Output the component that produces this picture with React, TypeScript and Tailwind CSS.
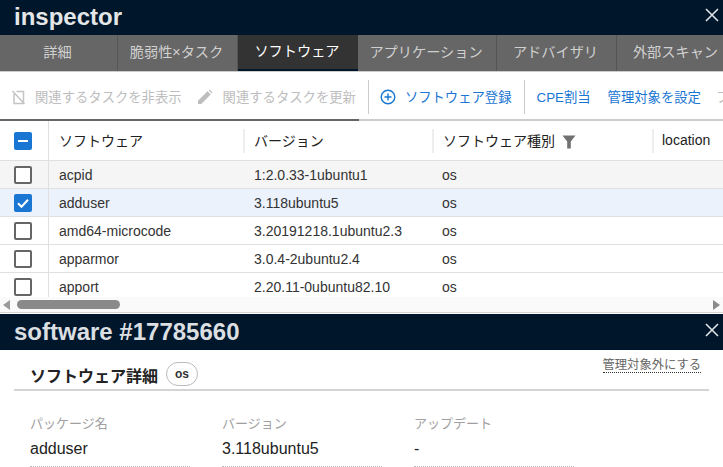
import React from "react";

const font = { fontFamily: '"Liberation Sans","Noto Sans CJK JP",sans-serif' };

const tabs = [
  ["詳細", "w-[118px]"],
  ["脆弱性×タスク", "w-[120px]"],
  ["ソフトウェア", "w-[120px]"],
  ["アプリケーション", "w-[139px]"],
  ["アドバイザリ", "w-[120px]"],
  ["外部スキャン", "w-[120px]"],
];

const rows = [
  ["acpid", "1:2.0.33-1ubuntu1", "os"],
  ["adduser", "3.118ubuntu5", "os"],
  ["amd64-microcode", "3.20191218.1ubuntu2.3", "os"],
  ["apparmor", "3.0.4-2ubuntu2.4", "os"],
  ["apport", "2.20.11-0ubuntu82.10", "os"],
];

function Close({ className }: { className: string }) {
  return (
    <svg width="14" height="14" viewBox="0 0 14 14" className={`shrink-0 ${className}`}>
      <path d="M1 1L13 13M13 1L1 13" stroke="#dfe3e6" strokeWidth="1.6" fill="none" />
    </svg>
  );
}

function Check({ state }: { state: "off" | "on" | "mixed" }) {
  if (state === "off") {
    return <div className="w-[18px] h-[18px] rounded-[2px] border-2 border-[#666666] bg-white" />;
  }
  return (
    <div className="w-[18px] h-[18px] rounded-[2px] bg-[#1976d2] flex items-center justify-center">
      {state === "on" ? (
        <svg width="14" height="14" viewBox="0 0 14 14">
          <path d="M2 7.2L5.5 10.7L12 3.8" stroke="#fff" strokeWidth="2" fill="none" />
        </svg>
      ) : (
        <div className="w-[10px] h-[2px] bg-white" />
      )}
    </div>
  );
}

function Field({ label, value, width }: { label: string; value: string; width: string }) {
  return (
    <div className={width}>
      <div className="text-[13px] leading-[18px] text-[#a0a0a0]">{label}</div>
      <div className="mt-[4px] text-[16px] leading-[24px] text-[#222222] pb-[5px] border-b border-dotted border-[#bbbbbb]">{value}</div>
    </div>
  );
}

export default function App() {
  return (
    <div style={font} className="w-[723px] h-[467px] overflow-hidden bg-white flex flex-col">
      <header className="h-[35px] shrink-0 bg-[#00172b] flex items-center justify-between pl-[14px] pr-[4px]">
        <h1 className="text-[24px] leading-[33px] -mt-[2px] font-bold text-[#e4e6e8]">inspector</h1>
        <Close className="-mt-[6px]" />
      </header>

      <nav className="h-[37px] shrink-0 bg-[#666666] flex overflow-hidden border-b border-[#cccccc]">
        {tabs.map(([t, w], i) => (
          <div
            key={t}
            className={`${w} shrink-0 flex items-center justify-center pr-[2px] text-[14.2px] whitespace-nowrap ${
              i === 2
                ? "bg-[#333333] text-white border-b-2 border-[#00172b]"
                : "text-[#d0d0d0] border-r border-[#555555]"
            }`}
          >
            {t}
          </div>
        ))}
      </nav>

      <div className="h-[47px] shrink-0 flex items-center pt-[2px] text-[13.33px] whitespace-nowrap overflow-hidden">
        <svg width="16" height="16" viewBox="0 0 16 16" className="ml-[10px] shrink-0">
          <path d="M6.5 2.5H13.5V14.5H4V5M2.5 2L14.5 15" stroke="#c4c4c4" strokeWidth="1.5" fill="none" />
        </svg>
        <span className="ml-[9px] pt-[2px] text-[#bdbdbd]">関連するタスクを非表示</span>
        <svg width="16" height="16" viewBox="0 0 16 16" className="ml-[15px] shrink-0">
          <path d="M1 15V11.8L10.5 2.3L13.7 5.5L4.2 15ZM11.5 1.3L12.5 0.5L15.5 3.5L14.7 4.5Z" fill="#bdbdbd" />
        </svg>
        <span className="ml-[10px] pt-[2px] text-[#bdbdbd]">関連するタスクを更新</span>
        <div className="ml-[12px] w-px h-[34px] bg-[#cccccc] shrink-0" />
        <svg width="16" height="16" viewBox="0 0 16 16" className="ml-[11px] shrink-0">
          <circle cx="8" cy="8" r="6.8" stroke="#1976d2" strokeWidth="1.4" fill="none" />
          <path d="M4.5 8H11.5M8 4.5V11.5" stroke="#1976d2" strokeWidth="1.4" />
        </svg>
        <span className="ml-[9px] pt-[2px] text-[#1976d2]">ソフトウェア登録</span>
        <div className="ml-[12px] w-px h-[34px] bg-[#cccccc] shrink-0" />
        <span className="ml-[12px] pt-[2px] text-[#1976d2]">CPE割当</span>
        <span className="ml-[17px] pt-[2px] text-[#1976d2]">管理対象を設定</span>
        <span className="ml-[15px] pt-[2px] text-[#bdbdbd]">フ</span>
      </div>

      <div className="h-[2px] shrink-0 flex">
        <div className="w-[359px] bg-[#666666]" />
        <div className="flex-1 bg-[#cccccc]" />
      </div>

      <section className="h-[176px] shrink-0 overflow-hidden relative text-[14px] text-[#333333]">
        <div className="h-[40px] flex items-center border-b border-[#e0e0e0] text-[#222222]">
          <div className="w-[49px] h-full shrink-0 border-r border-[#e0e0e0] flex items-center justify-center pr-[2px]">
            <Check state="mixed" />
          </div>
          <div className="w-[194px] shrink-0 pl-[10px] pt-[2px]">ソフトウェア</div>
          <div className="w-[189px] shrink-0 h-[24px] border-l-2 border-[#eeeeee] pl-[9px] pt-[2px] flex items-center">バージョン</div>
          <div className="w-[220px] shrink-0 h-[24px] border-l-2 border-[#eeeeee] pl-[9px] pt-[2px] flex items-center gap-[7px]">
            ソフトウェア種別
            <svg width="14" height="14" viewBox="0 0 14 14">
              <path d="M0.5 0.5H13.5L8.8 6.5V13.5H5.2V6.5Z" fill="#707070" />
            </svg>
          </div>
          <div className="flex-1 h-[24px] border-l-2 border-[#eeeeee] pl-[8px] flex items-center">location</div>
        </div>
        {rows.map((r, i) => (
          <div
            key={r[0]}
            className={`h-[28px] flex items-center border-b border-[#e0e0e0] pt-[1px] ${
              i === 0 ? "bg-[#f5f5f5]" : i === 1 ? "bg-[#ebf2fb]" : "bg-white"
            }`}
          >
            <div className="w-[49px] h-[28px] -mt-[1px] shrink-0 border-r border-[#e0e0e0] flex items-center justify-center pr-[2px] pt-[1px]">
              <Check state={i === 1 ? "on" : "off"} />
            </div>
            <div className="w-[194px] shrink-0 pl-[10px]">{r[0]}</div>
            <div className="w-[189px] shrink-0 pl-[11px]">{r[1]}</div>
            <div className="pl-[10px]">{r[2]}</div>
          </div>
        ))}
      </section>

      <div className="h-[16px] shrink-0 bg-[#fafafa] flex items-center justify-between px-[3px] border-b border-[#d4d4d4]">
        <div className="flex items-center gap-[6px]">
          <svg width="8" height="10" viewBox="0 0 8 10"><path d="M7 0V10L0 5Z" fill="#9a9a9a" /></svg>
          <div className="w-[103px] h-[9px] rounded-full bg-[#8a8a8a]" />
        </div>
        <svg width="8" height="10" viewBox="0 0 8 10"><path d="M1 0V10L8 5Z" fill="#8a8a8a" /></svg>
      </div>

      <div className="h-[36px] shrink-0 mt-px bg-[#00172b] flex items-center justify-between pl-[14px] pr-[4px]">
        <h2 className="text-[24px] leading-[36px] font-bold text-[#dcdfe2]">software #17785660</h2>
        <Close className="-mt-[5px]" />
      </div>

      <div className="pl-[14px] pr-[14px] pt-[11px]">
        <div className="h-[30px] flex items-start justify-between border-b-2 border-[#d4d4d4] pl-[16px] pr-[8px]">
          <div className="flex items-start gap-[8px] pt-[1px]">
            <span className="text-[16px] leading-[24px] mt-[3px] font-bold text-[#222222]">ソフトウェア詳細</span>
            <span className="w-[32px] h-[24px] rounded-full border border-[#bbbbbb] flex items-center justify-center text-[12px] font-bold text-[#333333]">os</span>
          </div>
          <span className="text-[12.3px] leading-[14px] -mt-[3px] text-[#666666] border-b border-dotted border-[#333333]">管理対象外にする</span>
        </div>
        <div className="flex gap-[32px] pl-[16px] pt-[24px]">
          <Field label="パッケージ名" value="adduser" width="w-[160px]" />
          <Field label="バージョン" value="3.118ubuntu5" width="w-[160px]" />
          <Field label="アップデート" value="-" width="w-[160px]" />
        </div>
      </div>
    </div>
  );
}
